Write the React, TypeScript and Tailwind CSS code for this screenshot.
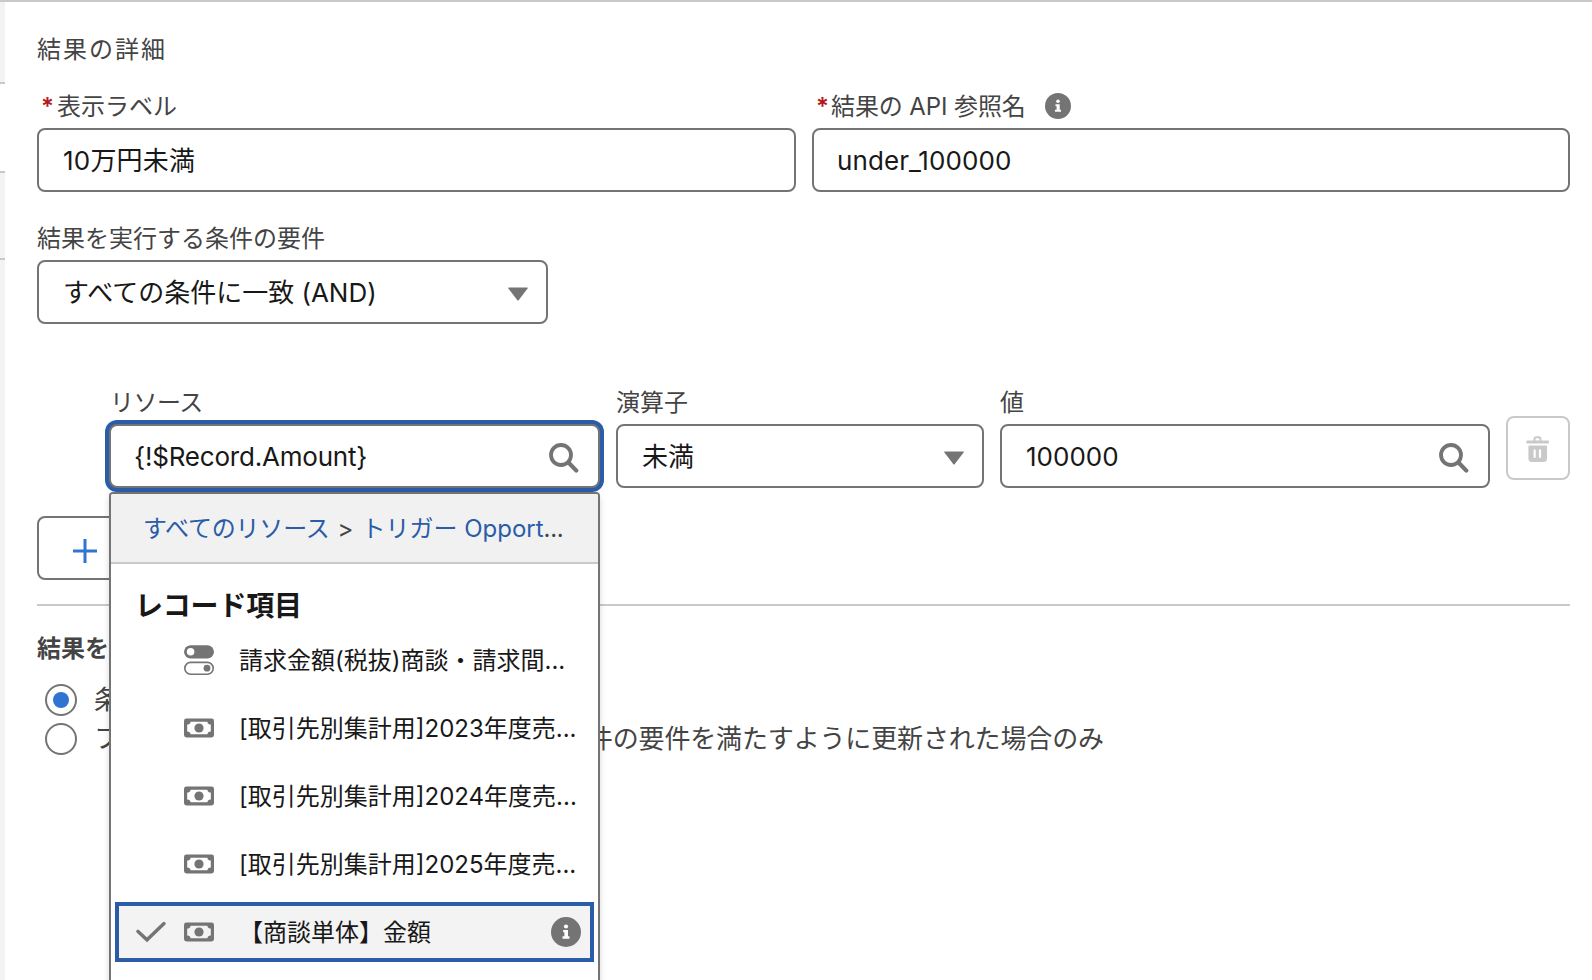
import type { ReactNode } from 'react';

function InfoIcon({ size }: { size: number }) {
  return (
    <svg width={size} height={size} viewBox="0 0 52 52" className="shrink-0">
      <circle cx="26" cy="26" r="26" fill="#747474" />
      <circle cx="26" cy="16.4" r="3.6" fill="#fff" />
      <path d="M21 22.5h8.4v11h2.6v4H20v-4h3.2v-7H21z" fill="#fff" />
    </svg>
  );
}

function SearchIcon() {
  return (
    <svg width="30" height="30" viewBox="0 0 30 30" className="mt-[3px] shrink-0" fill="none" stroke="#747474">
      <circle cx="12" cy="12" r="10" strokeWidth="3.8" />
      <path d="M19.5 19.5 L27.3 27.6" strokeWidth="4.2" strokeLinecap="round" />
    </svg>
  );
}

function CaretIcon() {
  return (
    <svg width="20" height="14" viewBox="0 0 20 14" className="mt-1 shrink-0">
      <path d="M0.8 0.4H19.2Q20.2 0.6 19.6 1.6L10.8 13Q10 14 9.2 13L0.4 1.6Q-0.2 0.6 0.8 0.4Z" fill="#747474" />
    </svg>
  );
}

function TrashIcon() {
  return (
    <svg width="24" height="26" viewBox="0 0 24 26" className="mt-0.5 shrink-0">
      <path d="M8.5 5V3.2Q8.5 1.2 10.5 1.2H12.5Q14.5 1.2 14.5 3.2V5" fill="none" stroke="#c9c9c9" strokeWidth="2" />
      <rect x="0.4" y="4.6" width="22.6" height="3" rx="1" fill="#c9c9c9" />
      <path
        fillRule="evenodd"
        d="M3.2 9.6H20.2Q21 9.6 21 10.4V22.6Q21 26 17.6 26H5.8Q2.4 26 2.4 22.6V10.4Q2.4 9.6 3.2 9.6ZM8.6 13.2Q7.6 13.2 7.6 14.2V21Q7.6 22.1 8.6 22.1Q9.7 22.1 9.7 21V14.2Q9.7 13.2 8.6 13.2ZM14 13.2Q12.9 13.2 12.9 14.2V21Q12.9 22.1 14 22.1Q15.1 22.1 15.1 21V14.2Q15.1 13.2 14 13.2Z"
        fill="#c9c9c9"
      />
    </svg>
  );
}

function ToggleIcon() {
  return (
    <svg width="30" height="30" viewBox="0 0 30 30" className="shrink-0">
      <rect x="0" y="0.2" width="30" height="13.2" rx="6.6" fill="#747474" />
      <circle cx="6.6" cy="6.8" r="3.8" fill="#fff" />
      <rect x="0.8" y="17.4" width="28.4" height="11.8" rx="5.9" fill="#fff" stroke="#747474" strokeWidth="1.6" />
      <circle cx="23" cy="23.2" r="3.4" fill="#747474" />
    </svg>
  );
}

function MoneyIcon() {
  return (
    <svg width="30" height="20" viewBox="0 0 30 20" className="shrink-0">
      <path
        fillRule="evenodd"
        d="M2.4 0.6H27.6Q30 0.6 30 3V17Q30 19.4 27.6 19.4H2.4Q0 19.4 0 17V3Q0 0.6 2.4 0.6ZM6.6 3.7Q6.4 6.4 3.2 6.6V13.4Q6.4 13.6 6.6 16.3H23.4Q23.6 13.6 26.8 13.4V6.6Q23.6 6.4 23.4 3.7Z"
        fill="#747474"
      />
      <circle cx="15" cy="10" r="4.6" fill="#747474" />
    </svg>
  );
}

function CheckIcon() {
  return (
    <svg width="30" height="22" viewBox="0 0 30 22" className="shrink-0" fill="none" stroke="#747474">
      <path d="M2 10.4 L11 18.8 L28 2.6" strokeWidth="3.4" strokeLinecap="round" />
    </svg>
  );
}

const box = 'flex h-16 items-center rounded-lg border-2 border-[#747474] bg-white text-[26px] text-[#181818]';

function Label({ required, children }: { required?: boolean; children: ReactNode }) {
  return (
    <div className="flex h-9 items-center whitespace-nowrap pt-px text-2xl text-[#444444]">
      {required && <span className="ml-1 w-[15px] text-2xl font-semibold leading-none text-[#b3191c]">*</span>}
      {children}
    </div>
  );
}

function Radio({ checked, children }: { checked?: boolean; children: ReactNode }) {
  return (
    <div className="flex h-[39px] items-center whitespace-nowrap tracking-[-0.15px]">
      <span className="mr-[17px] flex size-8 shrink-0 items-center justify-center rounded-full border-2 border-[#747474] bg-white">
        {checked && <span className="size-4 rounded-full bg-[#2e74d0]" />}
      </span>
      {children}
    </div>
  );
}

function Item({ icon, children }: { icon: ReactNode; children: ReactNode }) {
  return (
    <li className="flex h-[68px] items-center pl-[73px]">
      {icon}
      <span className="ml-[25px] mt-0.5 whitespace-nowrap">{children}</span>
    </li>
  );
}

function ResourceMenu() {
  return (
    <div className="absolute left-0 top-[68px] z-10 h-[520px] w-[491px] overflow-hidden rounded-t border-2 border-[#747474] bg-white shadow-[0_4px_6px_rgba(0,0,0,0.16)]">
      <div className="flex h-[70px] items-center whitespace-nowrap border-b-2 border-[#c9c9c9] bg-[#f1f1f1] pl-8 pt-0.5 text-2xl text-[#444444]">
        <span className="tracking-[-0.2px] text-[#2a5ca8]">すべてのリソース</span>
        <span className="mx-2">&gt;</span>
        <span className="text-[#2a5ca8]">トリガー Opport</span>
        <span className="tracking-[-0.3px]">...</span>
      </div>
      <h3 className="mt-6 flex h-9 items-center pl-6 text-[28px] font-bold tracking-[-0.2px] text-[#181818]">
        レコード項目
      </h3>
      <ul className="mt-0.5 text-2xl text-[#181818]">
        <Item icon={<ToggleIcon />}>請求金額(税抜)商談・請求間...</Item>
        <Item icon={<MoneyIcon />}>[取引先別集計用]2023年度売...</Item>
        <Item icon={<MoneyIcon />}>[取引先別集計用]2024年度売...</Item>
        <Item icon={<MoneyIcon />}>[取引先別集計用]2025年度売...</Item>
        <li className="mx-1 mt-1 flex h-[60px] items-center border-4 border-[#2a5ca8] bg-[#f3f3f3] pl-[17px] pr-[9px]">
          <CheckIcon />
          <span className="ml-[18px] flex">
            <MoneyIcon />
          </span>
          <span className="ml-[25px] mt-0.5 flex-1 whitespace-nowrap">【商談単体】金額</span>
          <InfoIcon size={30} />
        </li>
      </ul>
    </div>
  );
}

export default function App() {
  return (
    <div className="flex h-[980px] w-[1592px] overflow-hidden border-t-2 border-[#c9c9c9] bg-white font-['Inter','Noto_Sans_CJK_JP',sans-serif]">
      <div className="flex w-[5px] shrink-0 flex-col bg-[#f3f3f3]">
        <div className="h-20" />
        <div className="h-[91px] border-y-2 border-[#c9c9c9] bg-white" />
        <div className="h-[87px] border-b-2 border-[#c9c9c9]" />
      </div>
      <main className="ml-8 w-[1533px] text-[#444444]">
        <h2 className="mt-[30px] flex h-9 items-center text-2xl tracking-[2px]">結果の詳細</h2>
        <div className="mt-5 flex gap-4">
          <div className="w-[759px]">
            <Label required>
              <span className="ml-px">表示ラベル</span>
            </Label>
            <div className={`${box} mt-1 px-6 tracking-[0.2px]`}>10万円未満</div>
          </div>
          <div className="w-[758px]">
            <Label required>
              <span className="tracking-[-0.1px]">結果の API 参照名</span>
              <span className="-mt-px ml-[19px]">
                <InfoIcon size={26} />
              </span>
            </Label>
            <div className={`${box} mt-1 pl-[23px] tracking-[0.1px]`}>under_100000</div>
          </div>
        </div>
        <div className="mt-7 w-[511px]">
          <Label>結果を実行する条件の要件</Label>
          <div className={`${box} mt-1 justify-between pl-6 pr-[18px]`}>
            すべての条件に一致 (AND)
            <CaretIcon />
          </div>
        </div>

        <div className="mt-[60px] flex gap-4 pl-[72px]">
          <div className="w-[491px]">
            <Label>
              <span className="ml-px tracking-[-0.5px]">リソース</span>
            </Label>
            <div className="relative mt-1">
              <div className={`${box} justify-between pl-[23px] pr-[19px] tracking-[-0.2px] ring-4 ring-[#2a5ca8]`}>
                {'{!$Record.Amount}'}
                <SearchIcon />
              </div>
              <ResourceMenu />
            </div>
          </div>
          <div className="w-[368px]">
            <Label>演算子</Label>
            <div className={`${box} mt-1 justify-between pl-6 pr-[18px]`}>
              未満
              <CaretIcon />
            </div>
          </div>
          <div className="w-[490px]">
            <Label>値</Label>
            <div className={`${box} mt-1 justify-between pl-6 pr-[19px]`}>
              100000
              <SearchIcon />
            </div>
          </div>
          <button className="mt-8 flex size-16 items-center justify-center rounded-lg border-2 border-[#c9c9c9] bg-white">
            <TrashIcon />
          </button>
        </div>

        <button className={`${box} mt-7 w-[220px] pl-[34px]`}>
          <svg width="24" height="24" viewBox="0 0 24 24" className="mt-[5px] shrink-0" stroke="#2e74d0" strokeWidth="3">
            <path d="M12 0V24M0 12H24" />
          </svg>
        </button>
        <hr className="mt-6 border-t-2 border-[#c9c9c9]" />
        <h3 className="mt-6 flex h-9 items-center pt-0.5 text-2xl font-bold">結果を</h3>
        <div className="mt-[14px] pl-2 text-[26px]">
          <Radio checked>条</Radio>
          <Radio>
            <span>フ</span>
            <span className="ml-[467px]">件の要件を満たすように更新された場合のみ</span>
          </Radio>
        </div>
      </main>
    </div>
  );
}
